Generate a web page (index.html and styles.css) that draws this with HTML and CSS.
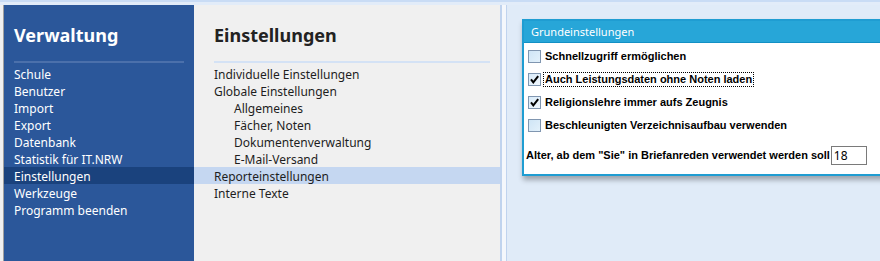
FILE: index.html
```html
<!DOCTYPE html>
<html lang="de">
<head>
<meta charset="utf-8">
<title>Einstellungen</title>
<link rel="stylesheet" href="styles.css">
</head>
<body>
<div class="topbar"></div>
<div class="topband"></div>
<div class="main">
  <div class="edge"></div>
  <nav class="nav">
    <h1 class="nav-title">Verwaltung</h1>
    <div class="nav-sep"></div>
    <ul class="nav-list">
      <li>Schule</li>
      <li>Benutzer</li>
      <li>Import</li>
      <li>Export</li>
      <li>Datenbank</li>
      <li>Statistik für IT.NRW</li>
      <li class="active">Einstellungen</li>
      <li>Werkzeuge</li>
      <li>Programm beenden</li>
    </ul>
  </nav>
  <section class="sub">
    <h2 class="sub-title">Einstellungen</h2>
    <div class="sub-sep"></div>
    <ul class="sub-list">
      <li>Individuelle Einstellungen</li>
      <li>Globale Einstellungen</li>
      <li class="indent">Allgemeines</li>
      <li class="indent">Fächer, Noten</li>
      <li class="indent">Dokumentenverwaltung</li>
      <li class="indent">E-Mail-Versand</li>
      <li class="active">Reporteinstellungen</li>
      <li>Interne Texte</li>
    </ul>
  </section>
  <div class="splitter"></div>
  <section class="content">
    <div class="group">
      <div class="group-head">Grundeinstellungen</div>
      <div class="group-body">
        <div class="row">
          <span class="cb"></span>
          <span class="lbl">Schnellzugriff ermöglichen</span>
        </div>
        <div class="row">
          <span class="cb checked"><svg viewBox="0 0 11 11" width="11" height="11"><path d="M2 5.4 L4.3 8.4 L9.2 2.2" fill="none" stroke="#000" stroke-width="2"/></svg></span>
          <span class="lbl focus">Auch Leistungsdaten ohne Noten laden</span>
        </div>
        <div class="row">
          <span class="cb checked"><svg viewBox="0 0 11 11" width="11" height="11"><path d="M2 5.4 L4.3 8.4 L9.2 2.2" fill="none" stroke="#000" stroke-width="2"/></svg></span>
          <span class="lbl">Religionslehre immer aufs Zeugnis</span>
        </div>
        <div class="row">
          <span class="cb"></span>
          <span class="lbl">Beschleunigten Verzeichnisaufbau verwenden</span>
        </div>
        <div class="age">
          <span class="age-lbl">Alter, ab dem "Sie" in Briefanreden verwendet werden soll</span>
          <span class="input">18</span>
        </div>
      </div>
    </div>
  </section>
</div>
</body>
</html>
```

FILE: styles.css
```css
* { box-sizing: border-box; }
html, body { margin: 0; padding: 0; }
body {
  width: 880px;
  height: 261px;
  overflow: hidden;
  background: #e0ebf8;
  font-family: "Noto Sans", "Open Sans", sans-serif;
  font-size: 12px;
}
ul { list-style: none; margin: 0; padding: 0; }
h1, h2 { margin: 0; }

.topbar { height: 2px; background: #c9dcf5; }
.topband { height: 3px; background: #e2ecf9; }

.main {
  display: flex;
  height: 256px;
}
.edge {
  width: 4px;
  background: #f0f0f0;
  border-right: 1px solid #a0a0a0;
}
.nav {
  width: 190px;
  background: #2b579a;
  color: #fff;
  padding-top: 18px;
}
.nav-title {
  font-size: 18px;
  line-height: 24px;
  font-weight: 700;
  padding-left: 10px;
  margin-bottom: 14px;
}
.nav-sep {
  height: 2px;
  background: #4b70ab;
  margin: 0 10px 2px 10px;
}
.nav-list li {
  height: 17px;
  line-height: 19px;
  padding-left: 10px;
  white-space: nowrap;
}
.nav-list li.active { background: #1a427d; }

.sub {
  width: 306px;
  background: #f0f0f0;
  color: #1e1e1e;
  padding-top: 18px;
}
.sub-title {
  font-size: 18px;
  line-height: 24px;
  font-weight: 700;
  padding-left: 20px;
  margin-bottom: 14px;
  color: #222;
}
.sub-sep {
  height: 2px;
  background: #d4e2f5;
  margin: 0 10px 2px 20px;
}
.sub-list li {
  height: 17px;
  line-height: 19px;
  padding-left: 20px;
  white-space: nowrap;
}
.sub-list li.indent { padding-left: 40px; }
.sub-list li.active { background: #c5d7f1; }

.splitter {
  width: 7px;
  background: #f4f7fc;
  border-left: 2px solid #c0d3ee;
  border-right: 1px solid #c0d3ee;
}

.content {
  flex: 1;
  overflow: hidden;
  padding: 14px 0 0 15px;
}
.group {
  width: 420px;
  background: #fff;
  border: 2px solid #1f9dd2;
  box-shadow: 1px 4px 5px rgba(0, 0, 0, 0.3);
}
.group-head {
  height: 22px;
  line-height: 21px;
  background: #27a6d8;
  color: #fff;
  padding-left: 7px;
  border-bottom: 1px solid #1290c4;
  font-size: 11px;
}
.group-body {
  padding: 2px 0 9px 2px;
  color: #000;
  font-family: "Liberation Sans", Arial, sans-serif;
}
.row {
  height: 23px;
  display: flex;
  align-items: center;
  padding-left: 2px;
}
.cb {
  width: 13px;
  height: 13px;
  border: 1px solid #8096b0;
  background: linear-gradient(135deg, #cfe5f6 0%, #e3f1fb 100%);
  margin-right: 2px;
  display: inline-flex;
  align-items: center;
  justify-content: center;
}
.cb.checked { background: linear-gradient(135deg, #d8eaf8 0%, #f0f7fd 100%); }
.cb svg { display: block; }
.lbl {
  font-weight: 700;
  font-size: 11px;
  line-height: 13px;
  padding: 0 1px;
  border: 1px solid transparent;
  white-space: nowrap;
}
.lbl.focus { border: 1px dotted #000; }
.age {
  display: flex;
  align-items: center;
  margin-top: 8px;
  height: 20px;
}
.age-lbl {
  font-weight: 700;
  font-size: 11px;
  white-space: nowrap;
  margin-right: 1px;
}
.input {
  width: 36px;
  height: 19px;
  border: 1px solid #7a7a7a;
  font-family: "Noto Sans", sans-serif;
  font-size: 12px;
  line-height: 17px;
  padding-left: 2px;
}
```
